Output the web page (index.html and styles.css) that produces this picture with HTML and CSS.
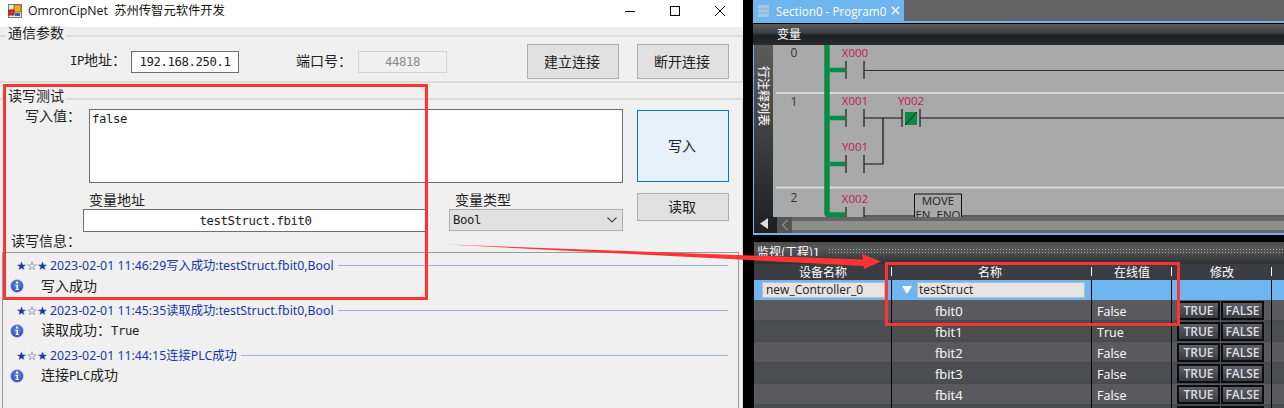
FILE: index.html
```html
<!DOCTYPE html>
<html>
<head>
    <title>OmronCipNet</title>
    <link rel="stylesheet" href="styles.css">
</head>
<body>
    <div class="app">
        <div class="window">
            <div class="titlebar">
                <svg class="app-icon" width="14" height="14" viewBox="0 0 14 14">
                    <rect x="0.5" y="0.5" width="13" height="13" fill="#e8e8e8" stroke="#777"/>
                    <rect x="6" y="1" width="7" height="7" fill="#e8b020" stroke="#a07010"/>
                    <rect x="1" y="6" width="5" height="5" fill="#d83020" stroke="#902010"/>
                    <rect x="7" y="9" width="5" height="3" fill="#3060c0"/>
                </svg>
                <span class="title-text">OmronCipNet&nbsp; 苏州传智元软件开发</span>
                <div class="win-buttons">
                    <svg width="12" height="12" viewBox="0 0 12 12"><path d="M1 6.5h10" stroke="#000" fill="none"/></svg>
                    <svg width="12" height="12" viewBox="0 0 12 12"><rect x="1.5" y="1.5" width="9" height="9" stroke="#000" fill="none"/></svg>
                    <svg width="12" height="12" viewBox="0 0 12 12"><path d="M1 1l10 10M11 1L1 11" stroke="#000" fill="none"/></svg>
                </div>
            </div>

            <div class="group group-conn">
                <div class="legend">通信参数</div>
                <div class="conn-row">
                    <span class="lbl lbl-ip"><span class="lat">IP</span>地址：</span>
                    <div class="field field-ip lat">192.168.250.1</div>
                    <span class="lbl lbl-port">端口号：</span>
                    <div class="field field-port lat">44818</div>
                    <div class="btn btn-connect">建立连接</div>
                    <div class="btn btn-disconnect">断开连接</div>
                </div>
            </div>

            <div class="group group-rw">
                <div class="legend">读写测试</div>
                <div class="write-row">
                    <span class="lbl lbl-value">写入值：</span>
                    <div class="textbox lat">false</div>
                    <div class="btn btn-write">写入</div>
                </div>
                <div class="addr-row">
                    <div class="addr-col">
                        <span class="lbl lbl-addr">变量地址</span>
                        <div class="field field-addr lat">testStruct.fbit0</div>
                    </div>
                    <div class="type-col">
                        <span class="lbl lbl-type">变量类型</span>
                        <div class="select">
                            <span class="lat">Bool</span>
                            <svg width="12" height="8" viewBox="0 0 12 8"><path d="M1.5 1.5L6 6l4.5-4.5" stroke="#444" stroke-width="1.2" fill="none"/></svg>
                        </div>
                    </div>
                    <div class="btn btn-read">读取</div>
                </div>
                <div class="lbl lbl-info">读写信息：</div>
                <div class="log">
                    <div class="log-entry">
                        <div class="log-head"><span class="stars">★☆★</span><span>2023-02-01 11:46:29写入成功:testStruct.fbit0,Bool</span><i class="log-rule"></i></div>
                        <div class="log-msg">
                            <svg class="info" width="14" height="14" viewBox="0 0 14 14"><use href="#info-icon"/></svg>
                            <span class="msg-text">写入成功</span>
                        </div>
                    </div>
                    <div class="log-entry">
                        <div class="log-head"><span class="stars">★☆★</span><span>2023-02-01 11:45:35读取成功:testStruct.fbit0,Bool</span><i class="log-rule"></i></div>
                        <div class="log-msg">
                            <svg class="info" width="14" height="14" viewBox="0 0 14 14"><use href="#info-icon"/></svg>
                            <span class="msg-text">读取成功：<span class="lat">True</span></span>
                        </div>
                    </div>
                    <div class="log-entry">
                        <div class="log-head"><span class="stars">★☆★</span><span>2023-02-01 11:44:15连接PLC成功</span><i class="log-rule"></i></div>
                        <div class="log-msg">
                            <svg class="info" width="14" height="14" viewBox="0 0 14 14"><use href="#info-icon"/></svg>
                            <span class="msg-text">连接<span class="lat">PLC</span>成功</span>
                        </div>
                    </div>
                </div>
            </div>
        </div>

        <div class="ide">
            <div class="tabs">
                <div class="tab">
                    <svg width="15" height="12" viewBox="0 0 15 12"><rect x="2" y="0" width="11" height="12" rx="1" fill="#a8c4dc"/><path d="M0 4h15M0 8h15" stroke="#6fb5f0"/></svg>
                    <span>Section0 - Program0</span>
                    <svg class="tab-close" width="9" height="9" viewBox="0 0 9 9"><path d="M1 1l7 7M8 1L1 8" stroke="#fff" stroke-width="1.4" fill="none"/></svg>
                </div>
            </div>
            <div class="tab-line"></div>
            <div class="var-strip">变量</div>
            <div class="editor">
                <div class="line-notes">
                    <span class="notes-text">行注释列表</span>
                    <svg width="10" height="12" viewBox="0 0 10 12"><path d="M9 0v11L1 5.5z" fill="#ddd"/></svg>
                </div>
                <div class="editor-main">
                    <svg class="ladder" width="511" height="172" viewBox="773 45 511 172">
                        <path d="M776 93h508M776 187.5h508" stroke="#d8d8d8" stroke-width="2"/>
                        <path d="M827 45v168q0 2 2 2h17" stroke="#0a8a48" stroke-width="5.5" fill="none"/>
                        <path d="M830 70h16M830 118h16M830 164h16" stroke="#0a8a48" stroke-width="4.5" fill="none"/>
                        <g stroke="#555" stroke-width="2">
                            <path d="M846 61v18M864 61v18M846 109v18M864 109v18M846 155v18M864 155v18M846 207v10M864 207v10M902 109v18M920 109v18"/>
                        </g>
                        <path d="M864 70.5h420" stroke="#333" stroke-width="1.2"/>
                        <path d="M864 118h38M920 118h364M883 118v46h-19M864 216h50M962 216h322" stroke="#111" stroke-width="1.2" fill="none"/>
                        <rect x="905" y="112" width="12" height="13" fill="#0a8a48"/>
                        <path d="M905 125l12-13" stroke="#111"/>
                        <path d="M914.500 217v-23h47v23" stroke="#111" fill="none"/>
                        <g class="rung-no">
                            <text x="794" y="57">0</text>
                            <text x="794" y="106">1</text>
                            <text x="794" y="202">2</text>
                        </g>
                        <g class="contact-name">
                            <text x="855" y="57">X000</text>
                            <text x="855" y="105">X001</text>
                            <text x="911" y="105">Y002</text>
                            <text x="855" y="151">Y001</text>
                            <text x="855" y="203">X002</text>
                        </g>
                        <g class="fb-text">
                            <text x="938" y="205">MOVE</text>
                            <text x="938" y="219">EN&#160;&#160;ENO</text>
                        </g>
                    </svg>
                    <div class="hscroll">
                        <div class="hscroll-btn">
                            <svg width="8" height="12" viewBox="0 0 8 12"><path d="M6.500 1L1.500 6l5 5" stroke="#888" stroke-width="1.5" fill="none"/></svg>
                        </div>
                        <div class="hscroll-track"></div>
                    </div>
                </div>
            </div>
            <div class="editor-end"></div>

            <div class="watch">
                <div class="watch-title">
                    <span class="watch-name">监视(工程)1</span>
                    <i class="watch-dots"></i>
                </div>
                <div class="row head">
                    <div class="cell">设备名称</div>
                    <div class="cell">名称</div>
                    <div class="cell">在线值</div>
                    <div class="cell">修改</div>
                    <div class="cell"></div>
                </div>
                <div class="row selected">
                    <div class="cell"><div class="cell-input">new_Controller_0</div></div>
                    <div class="cell cell-struct"><i class="triangle"></i><div class="cell-input">testStruct</div></div>
                    <div class="cell"></div>
                    <div class="cell"></div>
                    <div class="cell"></div>
                </div>
                <div class="row">
                    <div class="cell"></div>
                    <div class="cell cell-name">fbit0</div>
                    <div class="cell cell-val">False</div>
                    <div class="cell cell-mod"><div class="mini">TRUE</div><div class="mini">FALSE</div></div>
                    <div class="cell"></div>
                </div>
                <div class="row">
                    <div class="cell"></div>
                    <div class="cell cell-name">fbit1</div>
                    <div class="cell cell-val">True</div>
                    <div class="cell cell-mod"><div class="mini">TRUE</div><div class="mini">FALSE</div></div>
                    <div class="cell"></div>
                </div>
                <div class="row">
                    <div class="cell"></div>
                    <div class="cell cell-name">fbit2</div>
                    <div class="cell cell-val">False</div>
                    <div class="cell cell-mod"><div class="mini">TRUE</div><div class="mini">FALSE</div></div>
                    <div class="cell"></div>
                </div>
                <div class="row">
                    <div class="cell"></div>
                    <div class="cell cell-name">fbit3</div>
                    <div class="cell cell-val">False</div>
                    <div class="cell cell-mod"><div class="mini">TRUE</div><div class="mini">FALSE</div></div>
                    <div class="cell"></div>
                </div>
                <div class="row">
                    <div class="cell"></div>
                    <div class="cell cell-name">fbit4</div>
                    <div class="cell cell-val">False</div>
                    <div class="cell cell-mod"><div class="mini">TRUE</div><div class="mini">FALSE</div></div>
                    <div class="cell"></div>
                </div>
                <div class="row">
                    <div class="cell"></div>
                    <div class="cell"></div>
                    <div class="cell"></div>
                    <div class="cell cell-mod"><div class="mini"></div><div class="mini"></div></div>
                    <div class="cell"></div>
                </div>
            </div>
        </div>

        <!-- annotations drawn on top of the screenshot -->
        <div class="mark mark-form"></div>
        <div class="mark mark-watch"></div>
        <svg class="arrow" width="1284" height="408" viewBox="0 0 1284 408">
            <path d="M447 244.500L863 259.500L862 254L881 261.500L864 269L863.500 266z" fill="#ff3333"/>
        </svg>

        <svg width="0" height="0" class="defs">
            <defs>
                <radialGradient id="info-fill" cx="50%" cy="40%" r="60%">
                    <stop offset="0" stop-color="#6f8fe8"/>
                    <stop offset="1" stop-color="#2448b0"/>
                </radialGradient>
                <g id="info-icon">
                    <circle cx="7" cy="7" r="6.500" fill="url(#info-fill)" stroke="#c8d0e8" stroke-width="0.8"/>
                    <rect x="6" y="2.500" width="2" height="2" fill="#fff"/>
                    <path d="M5.500 6h2.500v4h1v1H5.500v-1h1V7h-1z" fill="#fff"/>
                </g>
            </defs>
        </svg>
    </div>
</body>
</html>
```

FILE: styles.css
```css
* {
    box-sizing: border-box;
}
html, body {
    margin: 0;
    padding: 0;
}
body {
    width: 1284px;
    height: 408px;
    overflow: hidden;
    font-family: "Noto Sans CJK SC", sans-serif;
}
.app {
    position: relative;
    display: flex;
    width: 1284px;
    height: 408px;
    overflow: hidden;
    background-color: #000;
}
.lat {
    font-family: "DejaVu Sans Mono", monospace;
    font-size: 12.300px;
    letter-spacing: -0.400px;
}

/* left window */
.window {
    display: flex;
    flex-direction: column;
    width: 743px;
    height: 408px;
    background-color: #f0f0f0;
    color: #222;
    font-size: 14px;
    line-height: 16px;
}
.titlebar {
    display: flex;
    align-items: center;
    flex: none;
    height: 27px;
    padding: 0 17px 5px 8px;
    margin-bottom: 8px;
    background-color: #fff;
    box-shadow: 0 8px 0 #eee;
}
.app-icon {
    margin-right: 6px;
}
.title-text {
    font-family: "Open Sans", "Noto Sans CJK SC", sans-serif;
    font-size: 12.300px;
    color: #111;
    white-space: nowrap;
}
.win-buttons {
    display: flex;
    gap: 33px;
    margin-left: auto;
}
.group {
    border-top: 2px solid #dcdcdc;
    border-right: 1px solid #dcdcdc;
}
.legend {
    width: fit-content;
    height: 18px;
    margin: -11px 0 0 6px;
    padding: 0 2px;
    background-color: #f0f0f0;
    line-height: 13px;
}
.group-conn {
    flex: none;
    height: 48px;
    border-bottom: 2px solid #dcdcdc;
}
.conn-row {
    display: flex;
    align-items: center;
    height: 35px;
}
.lbl {
    display: block;
    line-height: 13px;
    padding-bottom: 3px;
    white-space: nowrap;
}
.lbl-ip {
    margin-left: 70px;
    width: 61px;
}
.field {
    display: flex;
    align-items: center;
    justify-content: center;
    height: 22px;
    background-color: #fff;
    border: 1px solid #6e6e6e;
    white-space: nowrap;
}
.field-ip {
    width: 108px;
}
.lbl-port {
    margin-left: 57px;
    width: 62px;
}
.field-port {
    width: 89px;
    background-color: #f0f0f0;
    border-color: #d4d4d4;
    color: #8a8a8a;
}
.btn {
    display: flex;
    align-items: center;
    justify-content: center;
    flex: none;
    width: 92px;
    padding: 0 2px 2px 0;
    background-color: #e1e1e1;
    border: 1px solid #adadad;
}
.btn-connect {
    height: 35px;
    margin-left: 80px;
}
.btn-disconnect {
    height: 35px;
    margin-left: 18px;
}
.group-rw {
    flex: 1;
    min-height: 0;
    margin-top: 15px;
}
.write-row {
    display: flex;
    height: 74px;
    margin-top: 2px;
}
.lbl-value {
    width: 64px;
    margin-left: 25px;
}
.textbox {
    width: 534px;
    padding: 1px 2px;
    background-color: #fff;
    border: 1px solid #6e6e6e;
}
.btn-write {
    height: 72px;
    margin: 1px 0 0 14px;
    background-color: #e5f1fb;
    border-color: #0078d7;
}
.addr-row {
    display: flex;
    height: 39px;
    margin-top: 10px;
}
.addr-col {
    width: 345px;
    margin-left: 83px;
}
.lbl-addr {
    margin-left: 6px;
}
.field-addr {
    height: 23px;
}
.type-col {
    width: 174px;
    margin-left: 21px;
}
.lbl-type {
    margin-left: 6px;
}
.select {
    display: flex;
    align-items: center;
    justify-content: space-between;
    height: 22px;
    padding: 0 4px 0 3px;
    background-color: #e1e1e1;
    border: 1px solid #adadad;
}
.btn-read {
    height: 28px;
    margin-left: 14px;
}
.lbl-info {
    margin: 2px 0 2px 11px;
}
.log {
    width: 737px;
    height: 200px;
    margin-left: 2px;
    padding-left: 1px;
    border: 1px solid #9a9a9a;
    border-bottom: none;
}
.log-entry {
    height: 45px;
}
.log-head {
    display: flex;
    align-items: center;
    height: 24px;
    padding: 1px 10px 0 12px;
    font-family: "Noto Sans", "Noto Sans CJK SC", sans-serif;
    font-size: 12.300px;
    color: #1438a8;
    white-space: nowrap;
}
.stars {
    width: 34px;
    font-family: "DejaVu Sans", sans-serif;
    font-size: 12px;
    letter-spacing: -0.300px;
}
.log-rule {
    flex: 1;
    height: 1px;
    margin-left: 4px;
    background-color: #9db0dc;
}
.log-msg {
    display: flex;
    align-items: center;
    height: 20px;
    margin-top: -1px;
    padding-left: 6px;
}
.info {
    margin-right: 17px;
}
.msg-text {
    padding-bottom: 2px;
}
.defs {
    position: absolute;
}

/* right side, the IDE */
.ide {
    display: flex;
    flex-direction: column;
    width: 531px;
    height: 408px;
    margin-left: 10px;
    color: #fff;
}
.tabs {
    flex: none;
    height: 21px;
    background-color: #646464;
}
.tab {
    display: flex;
    align-items: center;
    width: 151px;
    height: 21px;
    padding: 0 4px 0 3px;
    background-color: #6fb5f0;
    font-family: "Open Sans", sans-serif;
    font-size: 11.700px;
    white-space: nowrap;
}
.tab span {
    margin-left: 5px;
}
.tab-close {
    margin-left: auto;
}
.tab-line {
    flex: none;
    height: 3px;
    background-color: #6fb5f0;
    border-bottom: 1px solid #000;
}
.var-strip {
    flex: none;
    height: 21px;
    padding-left: 24px;
    background: linear-gradient(#5a5a5a, #3f4142 40%, #1c2022 55%, #2a2c2e);
    font-size: 12px;
    line-height: 20px;
}
.editor {
    display: flex;
    flex: none;
    height: 188px;
}
.line-notes {
    display: flex;
    flex-direction: column;
    align-items: center;
    justify-content: space-between;
    flex: none;
    width: 24px;
    padding: 21px 0 3px;
    background: linear-gradient(#5c5c5c, #1c2022);
    border-left: 1px solid #6fb5f0;
    border-right: 4px solid #1c1e20;
}
.notes-text {
    writing-mode: vertical-rl;
    text-orientation: sideways;
    font-size: 12px;
    font-weight: 500;
    line-height: 14px;
    color: #eee;
}
.editor-main {
    flex: 1;
    min-width: 0;
    margin-left: -4px;
}
.ladder {
    display: block;
    background-color: #a9a9a9;
}
.rung-no text {
    font-family: "Open Sans", sans-serif;
    font-size: 12px;
    fill: #333;
    text-anchor: middle;
}
.contact-name text {
    font-family: "Open Sans", sans-serif;
    font-size: 11.500px;
    fill: #c0185c;
    text-anchor: middle;
}
.fb-text text {
    font-family: "Open Sans", sans-serif;
    font-size: 11.500px;
    fill: #222;
    text-anchor: middle;
}
.hscroll {
    display: flex;
    height: 16px;
    padding-left: 4px;
    background-color: #222;
}
.hscroll-btn {
    display: flex;
    align-items: center;
    justify-content: center;
    width: 15px;
    background-color: #555;
}
.hscroll-track {
    flex: 1;
    background: linear-gradient(#666 4px, #8e8e8e 4px, #8e8e8e 13px, #666 13px);
}
.editor-end {
    flex: none;
    height: 2px;
    background-color: #6fb5f0;
}
.watch {
    flex: none;
    margin: 7px 0 0 1px;
}
.watch-title {
    display: flex;
    align-items: center;
    height: 22px;
    padding: 0 0 5px 3px;
    background: linear-gradient(#4c4c4c, #575757 30%, #2e3032);
}
.watch-name {
    height: 11px;
    overflow: hidden;
    font-size: 12px;
    line-height: 13px;
    white-space: nowrap;
}
.watch-dots {
    flex: 1;
    height: 5px;
    margin-left: 8px;
    background-image: radial-gradient(#aaa 0.6px, transparent 0.8px);
    background-size: 3px 3px;
}
.row {
    display: grid;
    grid-template-columns: 138px 200px 80px 100px 1fr;
    height: 21px;
    background-color: #5a5a5e;
    border-bottom: 1px solid #47484c;
    font-family: "Open Sans", sans-serif;
    font-size: 12.500px;
}
.row:nth-child(odd) {
    background-color: #4c4d51;
}
.row .cell {
    border-right: 1px solid #000;
}
.row .cell:last-child {
    border-right: none;
}
.row.head {
    height: 16px;
    background: #3c3d42;
    border-bottom: none;
    font-family: "Noto Sans CJK SC", sans-serif;
    font-size: 12px;
}
.head .cell {
    position: relative;
    line-height: 16px;
    text-align: center;
    border-right: none;
}
.head .cell:nth-child(2) {
    padding-right: 4px;
}
.head .cell::after {
    content: "";
    position: absolute;
    right: 0;
    top: 3px;
    width: 1px;
    height: 9px;
    background-color: #fff;
}
.head .cell:last-child::after {
    display: none;
}
.row.selected {
    height: 20px;
    background: #6fb5f0;
    border-bottom: none;
}
.selected .cell {
    padding: 2px 6px 2px 8px;
}
.cell-input {
    height: 16px;
    padding-left: 3px;
    background-color: #e4e4e4;
    border: 1px solid #bdbdbd;
    color: #222;
    font-size: 12px;
    line-height: 14px;
}
.selected .cell-struct {
    display: flex;
    align-items: center;
    gap: 5px;
    padding-left: 10px;
}
.cell-struct .cell-input {
    flex: 1;
    padding-left: 1px;
}
.triangle {
    width: 0;
    height: 0;
    border-left: 5px solid transparent;
    border-right: 5px solid transparent;
    border-top: 8px solid #fff;
}
.cell-name {
    padding-left: 43px;
    font-size: 13px;
    line-height: 23px;
}
.cell-val {
    padding-left: 5px;
    line-height: 23px;
}
.cell-mod {
    display: flex;
    gap: 1px;
    padding: 1px 0 0 5px;
}
.mini {
    width: 43px;
    height: 19px;
    background: linear-gradient(#5d5f68, #393a42);
    border: 2px solid #0c0c0c;
    color: #ddd;
    font-size: 12px;
    font-weight: 600;
    line-height: 15px;
    text-align: center;
}

/* red marks */
.mark {
    position: absolute;
    border: 3px solid #ff3333;
}
.mark-form {
    left: 3px;
    top: 84px;
    width: 425px;
    height: 216px;
}
.mark-watch {
    left: 885px;
    top: 262px;
    width: 295px;
    height: 64px;
}
.arrow {
    position: absolute;
    left: 0;
    top: 0;
}
```
